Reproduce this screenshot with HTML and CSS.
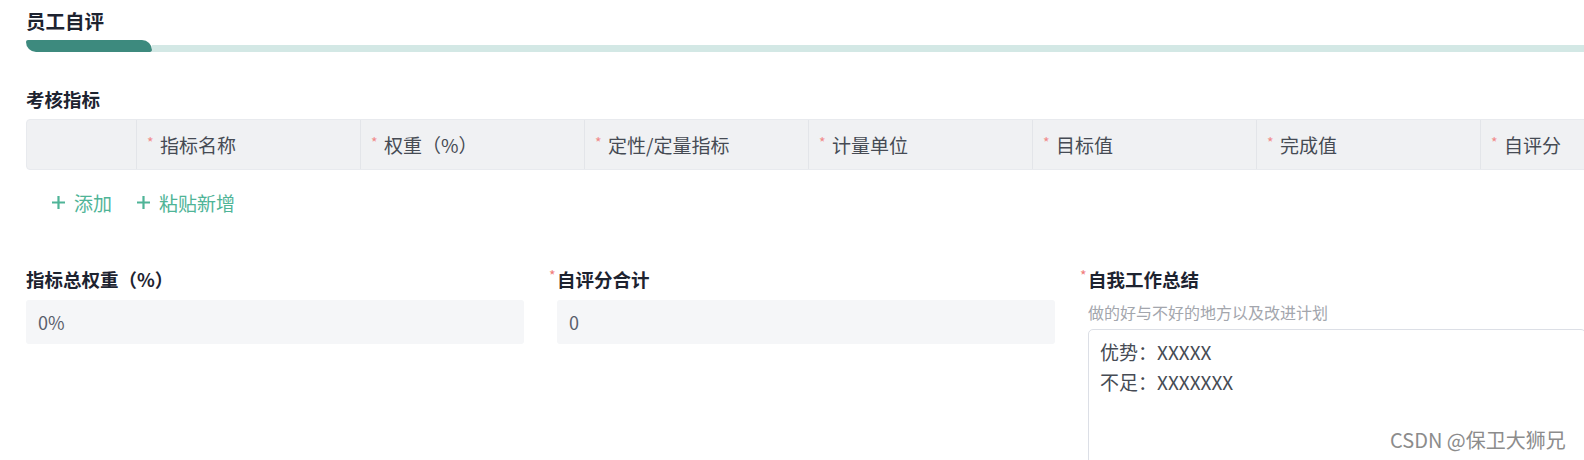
FILE: index.html
```html
<!DOCTYPE html>
<html lang="zh-CN">
<head>
<meta charset="utf-8">
<title>员工自评</title>
<link rel="stylesheet" href="styles.css">
</head>
<body>
<div class="page">
  <h2 class="title">员工自评</h2>
  <div class="bar"><div class="bar-active"></div><div class="bar-rest"></div></div>

  <h3 class="section">考核指标</h3>
  <div class="table-head">
    <div class="th th-first"></div>
    <div class="th"><span class="req">*</span>指标名称</div>
    <div class="th"><span class="req">*</span>权重（%）</div>
    <div class="th"><span class="req">*</span>定性/定量指标</div>
    <div class="th"><span class="req">*</span>计量单位</div>
    <div class="th"><span class="req">*</span>目标值</div>
    <div class="th"><span class="req">*</span>完成值</div>
    <div class="th"><span class="req">*</span>自评分</div>
  </div>

  <div class="actions">
    <span class="link"><svg class="plus" viewBox="0 0 15 15"><path d="M7.5 1v13M1 7.5h13"/></svg>添加</span>
    <span class="link"><svg class="plus" viewBox="0 0 15 15"><path d="M7.5 1v13M1 7.5h13"/></svg>粘贴新增</span>
  </div>

  <div class="fields">
    <div class="field">
      <div class="label">指标总权重（%）</div>
      <div class="box">0%</div>
    </div>
    <div class="field">
      <div class="label required">自评分合计</div>
      <div class="box">0</div>
    </div>
    <div class="field">
      <div class="label required">自我工作总结</div>
      <div class="hint">做的好与不好的地方以及改进计划</div>
      <div class="textarea">优势：XXXXX<br>不足：XXXXXXX</div>
    </div>
  </div>

  <div class="watermark">CSDN @保卫大狮兄</div>
</div>
</body>
</html>
```
FILE: styles.css
```css
html, body {
  margin: 0;
  padding: 0;
  background: #ffffff;
}
body {
  width: 1584px;
  height: 460px;
  overflow: hidden;
  font-family: "Noto Sans CJK SC", "Liberation Sans", sans-serif;
  color: #303133;
}
.page {
  position: relative;
  padding: 8px 0 0 26px;
  height: 452px;
  overflow: hidden;
}
.title {
  margin: 0;
  font-size: 19.5px;
  line-height: 26px;
  font-weight: 700;
  color: #1d2330;
}
.bar {
  display: flex;
  align-items: flex-end;
  height: 12px;
  margin-top: 6px;
}
.bar-active {
  width: 126px;
  height: 12px;
  background: #3d8a7e;
  border-radius: 2px 10px 2px 10px;
}
.bar-rest {
  flex: 1;
  height: 7px;
  background: #d3e8e5;
}
.section {
  margin: 34px 0 0;
  font-size: 18.5px;
  line-height: 26px;
  font-weight: 700;
  color: #1d2330;
}
.table-head {
  display: flex;
  margin-top: 7px;
  height: 49px;
  width: 1700px;
  background: #f0f1f3;
  border: 1px solid #e8eaee;
  border-radius: 4px;
}
.th {
  flex: 0 0 224px;
  box-sizing: border-box;
  border-left: 1px solid #e3e5e9;
  padding-left: 10px;
  display: flex;
  align-items: center;
  font-size: 19px;
  color: #464b54;
}
.th-first {
  flex: 0 0 109px;
  border-left: none;
}
.req {
  color: #f08a8a;
  font-size: 14px;
  width: 13px;
  align-self: center;
  margin-top: -6px;
}
.actions {
  display: flex;
  gap: 24px;
  margin-top: 17px;
  padding-left: 25px;
  height: 30px;
  align-items: center;
}
.link {
  display: inline-flex;
  align-items: center;
  gap: 8px;
  font-size: 19px;
  color: #4fb497;
}
.plus {
  width: 15px;
  height: 15px;
}
.plus path {
  stroke: currentColor;
  stroke-width: 2.2;
  fill: none;
}
.fields {
  display: grid;
  grid-template-columns: 498px 498px 498px;
  column-gap: 33px;
  margin-top: 49px;
}
.field {
  display: flex;
  flex-direction: column;
}
.label {
  font-size: 18.5px;
  line-height: 26px;
  font-weight: 700;
  color: #1d2330;
}
.label.required::before {
  content: "*";
  color: #f07b7b;
  font-size: 14px;
  font-weight: 400;
  margin-left: -8px;
  display: inline-block;
  width: 8px;
  vertical-align: top;
  line-height: 18px;
}
.box {
  margin-top: 8px;
  height: 44px;
  box-sizing: border-box;
  padding: 0 12px;
  background: #f5f6f8;
  border-radius: 3px;
  display: flex;
  align-items: center;
  font-size: 18px;
  color: #5a606c;
}
.hint {
  margin-top: 10px;
  font-size: 16px;
  line-height: 20px;
  color: #a3a6ad;
}
.textarea {
  margin-top: 7px;
  height: 200px;
  box-sizing: border-box;
  padding: 7px 11px;
  border: 1px solid #dcdfe6;
  border-radius: 5px;
  font-size: 19px;
  line-height: 30px;
  color: #464b54;
}
.watermark {
  position: absolute;
  left: 1390px;
  top: 427px;
  font-size: 20px;
  line-height: 26px;
  color: #8c8c8c;
  white-space: nowrap;
}
```
